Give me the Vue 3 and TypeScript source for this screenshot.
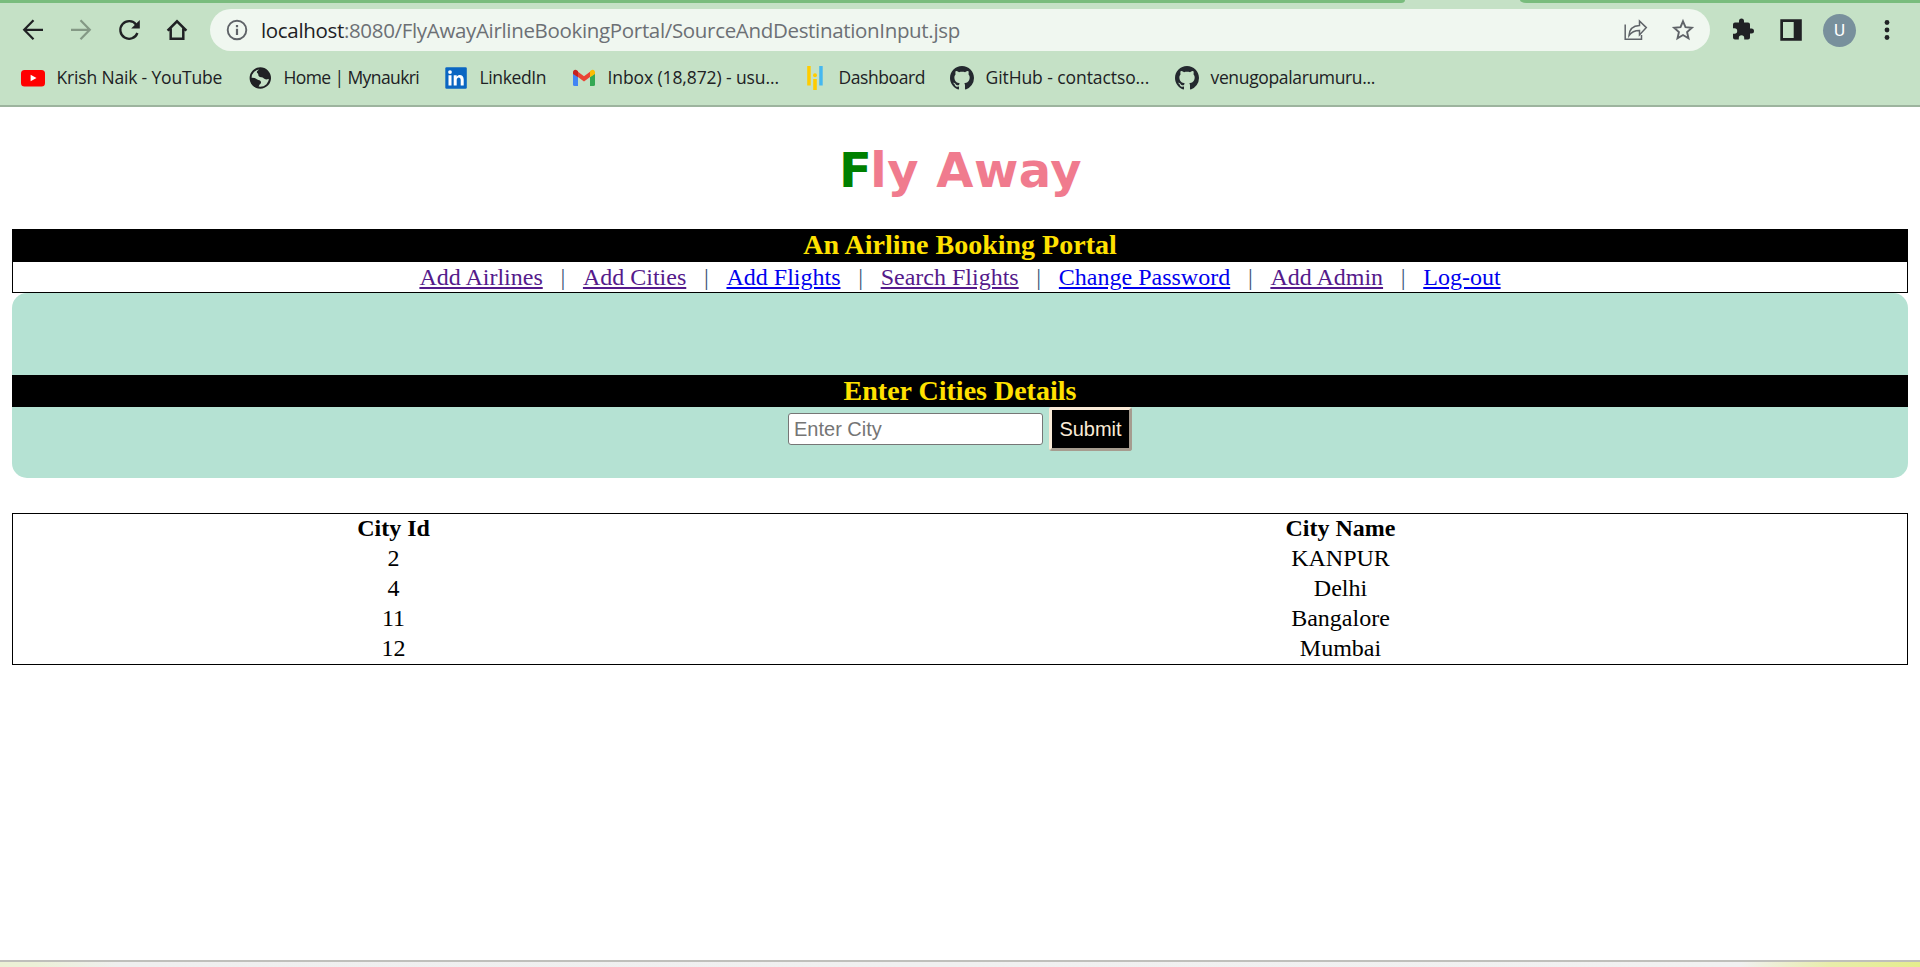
<script setup lang="ts">
interface Bookmark { icon: string; label: string; spacing: number }
interface NavLink { label: string; visited: boolean }
interface City { id: number; name: string }

const bookmarks: Bookmark[] = [
  { icon: 'youtube', label: 'Krish Naik - YouTube', spacing: -0.17 },
  { icon: 'globe', label: 'Home | Mynaukri', spacing: -0.6 },
  { icon: 'linkedin', label: 'LinkedIn', spacing: -0.38 },
  { icon: 'gmail', label: 'Inbox (18,872) - usu...', spacing: -0.1 },
  { icon: 'bars', label: 'Dashboard', spacing: -0.42 },
  { icon: 'github', label: 'GitHub - contactso...', spacing: -0.08 },
  { icon: 'github', label: 'venugopalarumuru...', spacing: -0.35 },
]

const links: NavLink[] = [
  { label: 'Add Airlines', visited: true },
  { label: 'Add Cities', visited: true },
  { label: 'Add Flights', visited: false },
  { label: 'Search Flights', visited: true },
  { label: 'Change Password', visited: false },
  { label: 'Add Admin', visited: true },
  { label: 'Log-out', visited: false },
]

const cities: City[] = [
  { id: 2, name: 'KANPUR' },
  { id: 4, name: 'Delhi' },
  { id: 11, name: 'Bangalore' },
  { id: 12, name: 'Mumbai' },
]
</script>

<template>
  <div class="window">
    <header class="chrome">
      <div class="tabstrip"><i class="tabs-left"></i><i class="tabs-right"></i></div>
      <div class="toolbar">
        <div class="nav-buttons">
          <svg class="ic" viewBox="0 0 24 24"><path d="M22 11.8H3.8M12.5 2.3 3.2 11.8l9.3 9.4" fill="none" stroke="#202124" stroke-width="2.2" /></svg>
          <svg class="ic" viewBox="0 0 24 24"><path d="M2 11.8h18.2M11.5 2.3l9.3 9.5-9.3 9.4" fill="none" stroke="#849985" stroke-width="2.2" /></svg>
          <svg class="ic" viewBox="0 0 24 24"><path d="M19.2 6.7A8.8 8.8 0 1 0 20.4 15" fill="none" stroke="#202124" stroke-width="2.3" /><path d="M22.8 2v8.6h-8.6z" fill="#202124" /></svg>
          <svg class="ic" viewBox="0 0 24 24"><path d="M2.6 12.6 12 3.3l9.4 9.3M5.7 10.5v10.2h12.6V10.5" fill="none" stroke="#202124" stroke-width="2.5" /></svg>
        </div>
        <div class="omnibox">
          <svg class="ic" viewBox="0 0 24 24"><circle cx="12" cy="12" r="9.3" fill="none" stroke="#5f6368" stroke-width="1.9" /><path d="M12 10.8v6.2M12 7v2.3" stroke="#5f6368" stroke-width="2.2" /></svg>
          <span class="url"><b>localhost</b>:8080/FlyAwayAirlineBookingPortal/SourceAndDestinationInput.jsp</span>
          <svg class="ic share" viewBox="0 0 24 24"><path d="M1.2 6.5v14.8h16.3V17M15.5 3v4.5C8.700 7.800 5.300 11.500 5 17.600c2.600-3.800 5.500-5 10.500-5v4.300l6.800-7.300z" fill="none" stroke="#5f6368" stroke-width="1.5" /></svg>
          <svg class="ic" viewBox="0 0 24 24"><path d="M12 3.300 14.500 9.200 20.900 9.800 16.100 14.100 17.500 20.300 12 17 6.500 20.300 7.900 14.100 3.100 9.800 9.500 9.200z" fill="none" stroke="#5f6368" stroke-width="1.9" /></svg>
        </div>
        <div class="actions">
          <svg class="ic" viewBox="0 0 24 24"><path transform="translate(0 -.5)" d="M20.500 11H19V7a2 2 0 0 0-2-2h-4V3.500a2.500 2.500 0 0 0-5 0V5H4a2 2 0 0 0-2 2v3.800h1.500a2.700 2.700 0 0 1 0 5.400H2V20a2 2 0 0 0 2 2h3.800v-1.500a2.700 2.700 0 0 1 5.400 0V22H17a2 2 0 0 0 2-2v-4h1.500a2.500 2.500 0 0 0 0-5z" fill="#202124" /></svg>
          <svg class="ic" viewBox="0 0 24 24"><path fill-rule="evenodd" d="M1.300 1.200h21.500v21.500H1.300zM4 4v16h10.700V4z" fill="#202124" /></svg>
          <span class="avatar">U</span>
          <svg class="ic" viewBox="0 0 24 24" fill="#202124"><circle cx="12" cy="4.500" r="2.400" /><circle cx="12" cy="12" r="2.400" /><circle cx="12" cy="19.500" r="2.400" /></svg>
        </div>
      </div>
      <div class="bookmarks">
        <div v-for="b in bookmarks" :key="b.label" class="bookmark">
          <svg v-if="b.icon === 'youtube'" class="ic" viewBox="0 0 24 24"><rect y="4" width="24" height="16.500" rx="3.500" fill="#f00" /><path d="M9.600 8.800v6.400l5.900-3.200z" fill="#fff" /></svg>
          <svg v-else-if="b.icon === 'globe'" class="ic" viewBox="0 0 24 24"><circle cx="12.300" cy="12" r="9.700" fill="#c5e1c6" stroke="#202124" stroke-width="2" /><path d="M2.500 6.500 2.200 11.500 6.500 12c1.800.3 2.200 1.700 3.800 2 1.800.4 3.200 1.300 2.600 3-.6 1.500-2.400 1.800-2.300 5.300C5 21.500 1.500 16.500 2.500 10zM11.500 2c.2 1.800-2.500 2.300-2.700 4 0 1.300 1.600 1.300 1.500 2.600-.1 1.700 1.200 2.700 3.200 2.600 1.700-.1 2 1.300 3.300 1.900 1.800.8 3.700-.3 5.500-.3C22.500 7 18.500 2 11.500 2z" fill="#202124" /></svg>
          <svg v-else-if="b.icon === 'linkedin'" class="ic" viewBox="0 0 24 24"><rect x="1.300" y="1.300" width="21.500" height="21.500" rx="1.300" fill="#0a66c2" /><circle cx="6" cy="6.100" r="1.900" fill="#fff" /><path d="M4.500 9.300h3v10.200h-3zM9.700 9.300h3v1.500c1.600-2.800 7-2.500 7 2.600v6.100h-3v-5.400c0-3.500-4-3.300-4 0v5.400h-3z" fill="#fff" /></svg>
          <svg v-else-if="b.icon === 'gmail'" class="ic" viewBox="0 0 24 24"><path d="M1 7.500 6 11v9H2.500A1.500 1.500 0 0 1 1 18.500z" fill="#4285f4" /><path d="M18 11l5-3.500v11a1.500 1.500 0 0 1-1.500 1.500H18z" fill="#34a853" /><path d="M6 5.700l6 4.500 6-4.500V11l-6 4.500L6 11z" fill="#ea4335" /><path d="M1 8V6.200C1 3.800 3.500 3 5.200 4.500L6 5.200V11.300z" fill="#c5221f" /><path d="M23 8V6.200c0-2.400-2.500-3.200-4.200-1.700l-.8.700v6.100z" fill="#fbbc04" /></svg>
          <svg v-else-if="b.icon === 'bars'" class="ic" viewBox="0 0 24 24"><path d="M4.200 0h3.500v19.500H4.200zM10.200 13h3.600v11h-3.600z" fill="#fc0" /><circle cx="12" cy="9.200" r="2" fill="#fc0" /><path d="M16.200 0h3.500v19.500h-3.500z" fill="#45b8f0" /></svg>
          <svg v-else class="ic" viewBox="0 0 16 16"><path d="M8 0C3.580 0 0 3.580 0 8c0 3.540 2.290 6.530 5.470 7.590.4.070.55-.17.55-.38 0-.19-.01-.82-.01-1.490-2.010.37-2.530-.49-2.690-.94-.09-.23-.48-.94-.82-1.130-.28-.15-.68-.52-.01-.53.63-.01 1.080.58 1.230.82.72 1.210 1.870.87 2.330.66.07-.52.28-.87.51-1.070-1.780-.2-3.640-.89-3.640-3.950 0-.87.31-1.590.82-2.150-.08-.2-.36-1.020.08-2.120 0 0 .67-.21 2.200.82.64-.18 1.320-.27 2-.27s1.360.09 2 .27c1.530-1.040 2.200-.82 2.200-.82.44 1.100.16 1.920.08 2.120.51.56.82 1.270.82 2.150 0 3.070-1.870 3.750-3.650 3.950.29.25.54.73.54 1.480 0 1.070-.01 1.930-.01 2.200 0 .21.15.46.55.38A8.010 8.010 0 0 0 16 8c0-4.420-3.580-8-8-8z" fill="#24292f" /></svg>
          <span class="bookmark-label" :style="{ letterSpacing: b.spacing + 'px' }">{{ b.label }}</span>
        </div>
      </div>
    </header>

    <main class="page">
      <h1 class="title"><span class="initial">F</span>ly Away</h1>
      <section class="portal">
        <h2 class="banner">An Airline Booking Portal</h2>
        <nav class="links">
          <template v-for="(l, i) in links" :key="l.label">
            <span v-if="i" class="sep">|</span><a href="#" :class="{ visited: l.visited }">{{ l.label }}</a>
          </template>
        </nav>
      </section>
      <section class="entry">
        <h2 class="banner">Enter Cities Details</h2>
        <form class="form" @submit.prevent>
          <input class="field" type="text" placeholder="Enter City" />
          <button class="submit" type="submit">Submit</button>
        </form>
      </section>
      <table class="cities">
        <thead>
          <tr><th class="col-id">City Id</th><th>City Name</th></tr>
        </thead>
        <tbody>
          <tr v-for="c in cities" :key="c.id"><td>{{ c.id }}</td><td>{{ c.name }}</td></tr>
        </tbody>
      </table>
    </main>
    <footer class="edge"></footer>
  </div>
</template>

<style>
body { margin: 0; background: #fff; }
</style>

<style scoped>
.window { display: flex; flex-direction: column; height: 967px; overflow: hidden; font-family: "Liberation Serif", serif; font-size: 24px; color: #000; }
.chrome { height: 105px; flex: none; background: #c5e1c6; border-bottom: 2px solid #9db49e; font-family: "Open Sans", sans-serif; }
.tabstrip { display: flex; justify-content: space-between; height: 3px; }
.tabs-left { width: 1405px; background: #79bc7d; border-bottom-right-radius: 4px 3px; }
.tabs-right { width: 400px; background: #79bc7d; border-bottom-left-radius: 6px 3px; }
.toolbar { display: flex; align-items: center; height: 54px; padding-left: 21px; }
.ic { width: 24px; height: 24px; flex: none; display: block; }
.nav-buttons { display: flex; gap: 24px; }
.omnibox { display: flex; align-items: center; box-sizing: border-box; width: 1500px; height: 42px; margin-left: 21px; padding: 0 15px; border-radius: 21px; background: #f0f7f0; }
.url { flex: 1; margin-left: 12px; font-size: 20.500px; line-height: 28px; letter-spacing: -0.33px; color: #6c7075; white-space: nowrap; }
.url b { font-weight: 400; color: #202124; }
.share { margin-right: 23px; }
.actions { display: flex; align-items: center; margin-left: 21px; }
.actions .ic + .ic { margin-left: 24px; }
.avatar { width: 33px; height: 33px; margin: 0 19px 0 20px; border-radius: 50%; background: #78909c; color: #fff; font: 17px/33px Roboto, sans-serif; text-align: center; }
.bookmarks { display: grid; grid-template-columns: 227px 196px 128px 231px 147px 225px 240px; align-items: center; height: 42px; padding-left: 21px; }
.bookmark { display: flex; align-items: center; gap: 11.500px; }
.bookmark-label { padding-bottom: 2px; font-size: 17.500px; line-height: 22px; color: #202124; white-space: nowrap; }

.page { flex: 1; padding: 0 12px; }
.title { margin: 34px 0 30px; padding-left: 1px; font: bold 48px/58px "DejaVu Sans", Verdana, sans-serif; letter-spacing: 0.5px; text-align: center; color: #f07b8e; }
.initial { color: #008000; letter-spacing: -1.5px; }
.portal { border: 1px solid #000; border-top: 0; }
.banner { height: 32px; margin: 0; background: #000; color: #ffe100; font-size: 28px; line-height: 31px; text-align: center; }
.portal .banner { height: 33px; }
.links { display: flex; justify-content: center; height: 30px; line-height: 30px; white-space: nowrap; }
.links a { color: #0000ee; text-decoration: underline; }
.links a.visited { color: #551a8b; }
.sep { margin: 0 17.700px; color: #3d5878; }
.entry { box-sizing: border-box; height: 185px; padding-top: 82px; border-radius: 15px; background: #b5e2d3; }
.form { display: flex; justify-content: center; align-items: flex-start; gap: 6px; }
.field { box-sizing: border-box; width: 255px; height: 32px; margin: 6px 0 0; padding: 0 5px; border: 1px solid #767676; border-radius: 3px; background: #fff; font: 20px "Liberation Sans", sans-serif; }
.field::placeholder { color: #757575; }
.submit { box-sizing: border-box; width: 83px; height: 44px; padding: 0; border: 3px outset #faebd7; border-radius: 3px; background: #000; color: #faebd7; font: 20px "Liberation Sans", sans-serif; }
.cities { width: 100%; margin-top: 35px; border: 1px solid #000; border-spacing: 0; table-layout: fixed; text-align: center; }
.cities th, .cities td { height: 30px; padding: 0 0 2px; box-sizing: border-box; line-height: 28px; }
.cities .col-id { width: 761px; }
.edge { flex: none; height: 5px; border-top: 2px solid #bfbfbb; background: linear-gradient(90deg, #ecf1d5 0, #ecf1d8 35px, #efefef 120px, #f1f1f1 1740px, #e8edaa 1830px, #e5ed8d 100%); }
</style>
